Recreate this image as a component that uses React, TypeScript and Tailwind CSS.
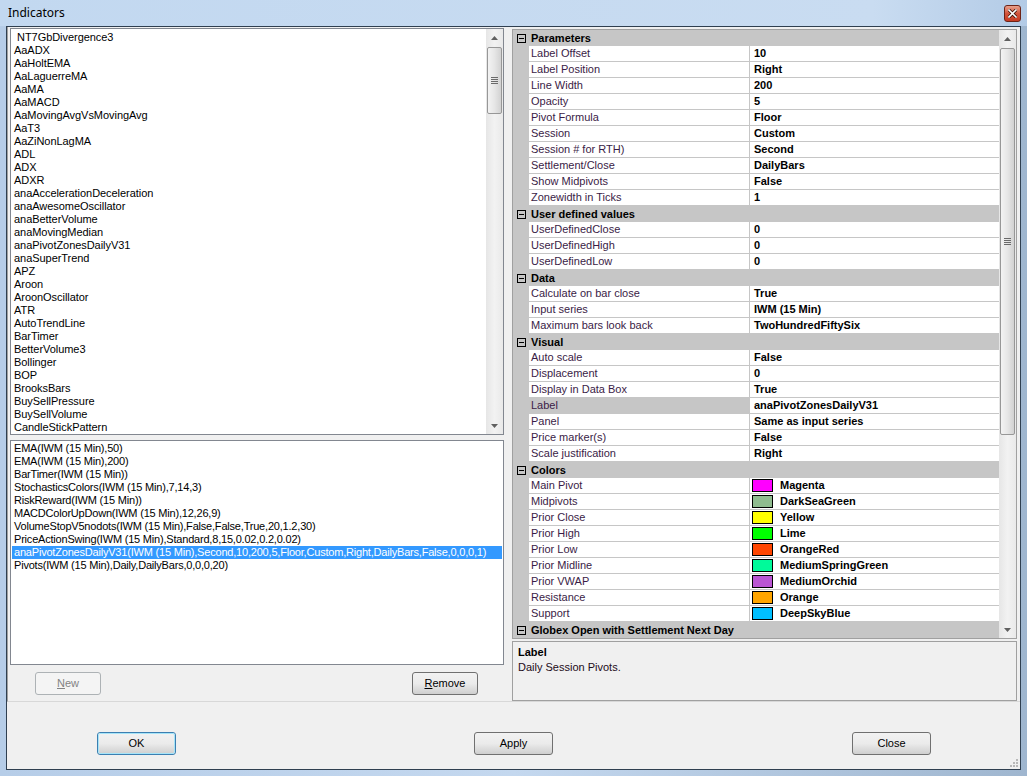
import React from "react";

const indicators = [
  " NT7GbDivergence3",
  "AaADX",
  "AaHoltEMA",
  "AaLaguerreMA",
  "AaMA",
  "AaMACD",
  "AaMovingAvgVsMovingAvg",
  "AaT3",
  "AaZiNonLagMA",
  "ADL",
  "ADX",
  "ADXR",
  "anaAccelerationDeceleration",
  "anaAwesomeOscillator",
  "anaBetterVolume",
  "anaMovingMedian",
  "anaPivotZonesDailyV31",
  "anaSuperTrend",
  "APZ",
  "Aroon",
  "AroonOscillator",
  "ATR",
  "AutoTrendLine",
  "BarTimer",
  "BetterVolume3",
  "Bollinger",
  "BOP",
  "BrooksBars",
  "BuySellPressure",
  "BuySellVolume",
  "CandleStickPattern",
];

const applied = [
  "EMA(IWM (15 Min),50)",
  "EMA(IWM (15 Min),200)",
  "BarTimer(IWM (15 Min))",
  "StochasticsColors(IWM (15 Min),7,14,3)",
  "RiskReward(IWM (15 Min))",
  "MACDColorUpDown(IWM (15 Min),12,26,9)",
  "VolumeStopV5nodots(IWM (15 Min),False,False,True,20,1.2,30)",
  "PriceActionSwing(IWM (15 Min),Standard,8,15,0.02,0.2,0.02)",
  "anaPivotZonesDailyV31(IWM (15 Min),Second,10,200,5,Floor,Custom,Right,DailyBars,False,0,0,0,1)",
  "Pivots(IWM (15 Min),Daily,DailyBars,0,0,0,20)",
];

type Row = { name: string; value: string; color?: string; selected?: boolean };
type Section = { title: string; rows: Row[] };

const sections: Section[] = [
  {
    title: "Parameters",
    rows: [
      { name: "Label Offset", value: "10" },
      { name: "Label Position", value: "Right" },
      { name: "Line Width", value: "200" },
      { name: "Opacity", value: "5" },
      { name: "Pivot Formula", value: "Floor" },
      { name: "Session", value: "Custom" },
      { name: "Session # for RTH)", value: "Second" },
      { name: "Settlement/Close", value: "DailyBars" },
      { name: "Show Midpivots", value: "False" },
      { name: "Zonewidth in Ticks", value: "1" },
    ],
  },
  {
    title: "User defined values",
    rows: [
      { name: "UserDefinedClose", value: "0" },
      { name: "UserDefinedHigh", value: "0" },
      { name: "UserDefinedLow", value: "0" },
    ],
  },
  {
    title: "Data",
    rows: [
      { name: "Calculate on bar close", value: "True" },
      { name: "Input series", value: "IWM (15 Min)" },
      { name: "Maximum bars look back", value: "TwoHundredFiftySix" },
    ],
  },
  {
    title: "Visual",
    rows: [
      { name: "Auto scale", value: "False" },
      { name: "Displacement", value: "0" },
      { name: "Display in Data Box", value: "True" },
      { name: "Label", value: "anaPivotZonesDailyV31", selected: true },
      { name: "Panel", value: "Same as input series" },
      { name: "Price marker(s)", value: "False" },
      { name: "Scale justification", value: "Right" },
    ],
  },
  {
    title: "Colors",
    rows: [
      { name: "Main Pivot", value: "Magenta", color: "#ff00ff" },
      { name: "Midpivots", value: "DarkSeaGreen", color: "#8fbc8f" },
      { name: "Prior Close", value: "Yellow", color: "#ffff00" },
      { name: "Prior High", value: "Lime", color: "#00ff00" },
      { name: "Prior Low", value: "OrangeRed", color: "#ff4500" },
      { name: "Prior Midline", value: "MediumSpringGreen", color: "#00fa9a" },
      { name: "Prior VWAP", value: "MediumOrchid", color: "#ba55d3" },
      { name: "Resistance", value: "Orange", color: "#ffa500" },
      { name: "Support", value: "DeepSkyBlue", color: "#00bfff" },
    ],
  },
  { title: "Globex Open with Settlement Next Day", rows: [] },
];

function ArrowUp() {
  return (
    <svg width="7" height="4" viewBox="0 0 7 4">
      <path d="M0 4 L3.5 0 L7 4 Z" fill="#606060" />
    </svg>
  );
}
function ArrowDown() {
  return (
    <svg width="7" height="4" viewBox="0 0 7 4">
      <path d="M0 0 L3.5 4 L7 0 Z" fill="#606060" />
    </svg>
  );
}

function Grip() {
  return (
    <div className="flex flex-col gap-[1px] items-center">
      <div className="w-[7px] h-[1px] bg-[#6a6a6a]" />
      <div className="w-[7px] h-[1px] bg-[#6a6a6a]" />
      <div className="w-[7px] h-[1px] bg-[#6a6a6a]" />
      <div className="w-[7px] h-[1px] bg-[#6a6a6a]" />
    </div>
  );
}

function Thumb({ cls }: { cls: string }) {
  return (
    <div
      className={
        "w-[15px] mx-auto rounded-[2px] border border-[#979797] bg-gradient-to-r from-[#f3f3f3] via-[#e6e6e6] to-[#d2d2d2] flex items-center justify-center " +
        cls
      }
    >
      <Grip />
    </div>
  );
}

function ScrollBar({ thumbCls }: { thumbCls: string }) {
  return (
    <div className="w-[17px] h-full flex flex-col bg-gradient-to-r from-[#e6e6e6] via-[#f2f2f2] to-[#e9e9e9]">
      <div className="h-[17px] flex items-center justify-center">
        <ArrowUp />
      </div>
      <div className="flex-1 flex flex-col">
        <Thumb cls={thumbCls} />
      </div>
      <div className="h-[17px] flex items-center justify-center">
        <ArrowDown />
      </div>
    </div>
  );
}

function CategoryIcon() {
  return (
    <div className="w-[9px] h-[9px] border border-[#000] bg-transparent flex items-center justify-center">
      <div className="w-[5px] h-[1px] bg-[#000]" />
    </div>
  );
}

function WinButton({
  children,
  cls = "",
  disabled = false,
  focused = false,
}: {
  children: React.ReactNode;
  cls?: string;
  disabled?: boolean;
  focused?: boolean;
}) {
  const base =
    "h-[23px] rounded-[3px] flex items-center justify-center text-[11px] leading-none ";
  if (disabled) {
    return (
      <div
        className={
          base + "border border-[#adb2b5] bg-[#f4f4f4] text-[#838383] " + cls
        }
      >
        {children}
      </div>
    );
  }
  return (
    <div
      className={
        base +
        (focused ? "border border-[#3c7fb1] " : "border border-[#707070] ") +
        "text-black bg-gradient-to-b from-[#f2f2f2] via-[#ebebeb] via-50% to-[#cfcfcf] " +
        cls
      }
    >
      {focused ? (
        <div className="w-full h-full rounded-[2px] border border-[#a6e4f8] flex items-center justify-center">
          {children}
        </div>
      ) : (
        children
      )}
    </div>
  );
}

function PropRow({ row }: { row: Row }) {
  return (
    <div className="h-[16px] flex">
      <div className="w-[16px] bg-[#c6c6c6]" />
      <div
        className={
          "w-[220px] pl-[2px] flex items-center text-[#3a1c46] border-b border-[#c6c6c6] whitespace-nowrap overflow-hidden " +
          (row.selected ? "bg-[#c6c6c6]" : "bg-white")
        }
      >
        {row.name}
      </div>
      <div className="w-[1px] bg-[#c6c6c6]" />
      <div className="w-[249px] bg-white border-b border-[#c6c6c6] flex items-center font-bold text-black whitespace-nowrap overflow-hidden">
        {row.color ? (
          <div className="flex items-center pl-[2px]">
            <div
              className="w-[21px] h-[13px] border border-black"
              style={{ backgroundColor: row.color }}
            />
            <span className="ml-[7px]">{row.value}</span>
          </div>
        ) : (
          <span className="pl-[4px]">{row.value}</span>
        )}
      </div>
    </div>
  );
}

function PropertyGrid() {
  return (
    <div className="w-[505px] h-[610px] mt-[2px] border border-[#a0a0a0] bg-white flex">
      <div className="w-[486px] flex flex-col bg-[#f0f0f0]">
        {sections.map((s) => (
          <React.Fragment key={s.title}>
            <div className="h-[16px] bg-[#c6c6c6] flex items-center">
              <div className="w-[16px] flex items-center justify-center pl-[1px]">
                <CategoryIcon />
              </div>
              <div className="pl-[2px] font-bold text-black whitespace-nowrap">
                {s.title}
              </div>
            </div>
            {s.rows.map((r) => (
              <PropRow key={r.name} row={r} />
            ))}
          </React.Fragment>
        ))}
      </div>
      <ScrollBar thumbCls="mt-[1px] h-[387px]" />
    </div>
  );
}

export default function App() {
  return (
    <div
      className="w-[1027px] h-[776px] flex flex-col bg-gradient-to-r from-[#b6cde8] via-[#c4d8ef] to-[#9fb6cf] text-[11px] leading-[13px] font-['Liberation_Sans',Arial,sans-serif] overflow-hidden"
    >
      {/* Title bar */}
      <div className="h-[26px] flex items-center justify-between bg-gradient-to-r from-[#c2d8f0] via-[#c9dcf1] via-85% to-[#b3cbe6]">
        <div className="pl-[8px] text-[12px] text-black font-['Noto_Sans',sans-serif] leading-none">
          Indicators
        </div>
        <div className="mr-[6px] w-[17px] h-[17px] rounded-[3px] border border-[#6d2317] bg-gradient-to-b from-[#e8a08c] via-[#d2543c] to-[#c63b22] flex items-center justify-center">
          <svg width="9" height="9" viewBox="0 0 9 9">
            <path
              d="M1 1 L8 8 M8 1 L1 8"
              stroke="#3a1208"
              strokeWidth="3.2"
              strokeLinecap="square"
            />
            <path
              d="M1 1 L8 8 M8 1 L1 8"
              stroke="#ffffff"
              strokeWidth="1.6"
              strokeLinecap="square"
            />
          </svg>
        </div>
      </div>

      {/* Client area */}
      <div className="ml-[6px] mr-[6px] h-[744px] border border-[#2f3f50] bg-[#f0f0f0] flex flex-col">
        {/* Top split section */}
        <div className="h-[675px] flex border-l border-b border-l-[#a0a0a0] border-b-[#d8d8d8]">
          {/* Left column */}
          <div className="w-[499px] flex flex-col">
            <div className="ml-[2px] mt-[1px] w-[494px] h-[407px] border border-[#828790] bg-white flex">
              <div className="flex-1 pt-[2px] pl-[3px] text-black whitespace-pre tracking-[-0.05px]">
                {indicators.map((n) => (
                  <div key={n} className="h-[13px] leading-[13px]">
                    {n}
                  </div>
                ))}
              </div>
              <ScrollBar thumbCls="mt-[1px] h-[67px]" />
            </div>
            <div className="ml-[2px] mt-[5px] w-[494px] h-[225px] border border-[#828790] bg-white pt-[1px] pl-[1px] pr-[1px] tracking-[-0.2px]">
              {applied.map((n, i) => (
                <div
                  key={n}
                  className={
                    "h-[13px] leading-[13px] pl-[2px] whitespace-nowrap overflow-hidden " +
                    (i === 8 ? "bg-[#3399ff] text-white" : "text-black")
                  }
                >
                  {n}
                </div>
              ))}
            </div>
            <div className="mt-[7px] flex">
              <WinButton disabled cls="ml-[27px] w-[66px]">
                <span>
                  <span className="underline">N</span>ew
                </span>
              </WinButton>
              <WinButton cls="ml-[311px] w-[66px]">
                <span>
                  <span className="underline">R</span>emove
                </span>
              </WinButton>
            </div>
          </div>

          {/* Right column */}
          <div className="ml-[5px] flex flex-col">
            <PropertyGrid />
            <div className="mt-[2px] w-[505px] h-[60px] border border-[#a0a0a0] bg-[#f0f0f0] pl-[5px] pt-[3px]">
              <div className="font-bold text-black h-[15px] leading-[15px]">
                Label
              </div>
              <div className="text-[#1e0c18] h-[15px] leading-[15px]">
                Daily Session Pivots.
              </div>
            </div>
          </div>
        </div>

        {/* Bottom buttons */}
        <div className="flex-1 flex items-start pt-[30px] relative">
          <WinButton focused cls="ml-[90px] w-[79px]">
            OK
          </WinButton>
          <WinButton cls="ml-[298px] w-[79px]">Apply</WinButton>
          <WinButton cls="ml-[299px] w-[79px]">Close</WinButton>
          <div className="absolute right-[2px] bottom-[2px] grid grid-cols-3 gap-[1px]">
            <div />
            <div />
            <div className="w-[2px] h-[2px] bg-[#b8b8b8]" />
            <div />
            <div className="w-[2px] h-[2px] bg-[#b8b8b8]" />
            <div className="w-[2px] h-[2px] bg-[#b8b8b8]" />
            <div className="w-[2px] h-[2px] bg-[#b8b8b8]" />
            <div className="w-[2px] h-[2px] bg-[#b8b8b8]" />
            <div className="w-[2px] h-[2px] bg-[#b8b8b8]" />
          </div>
        </div>
      </div>
    </div>
  );
}
